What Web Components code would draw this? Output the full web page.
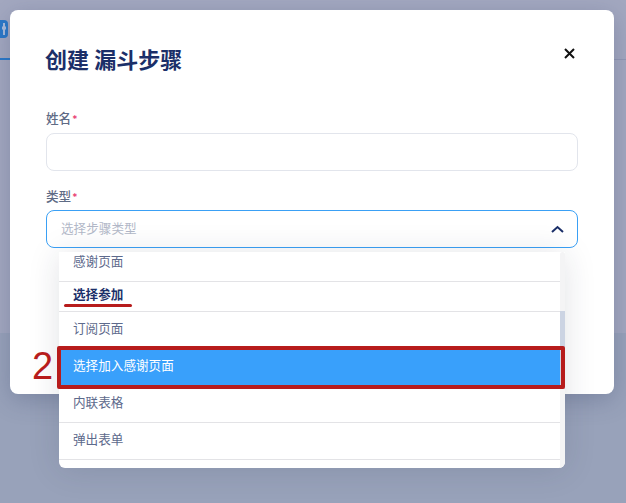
<!DOCTYPE html>
<html lang="zh">
<head>
<meta charset="utf-8">
<title>创建 漏斗步骤</title>
<style>
  html, body { margin: 0; height: 100%; overflow: hidden; }
  body { font-family: "Inter", "Noto Sans CJK SC", sans-serif; }
</style>
</head>
<body>
<funnel-backdrop>
  <funnel-modal heading="创建 漏斗步骤">
    <funnel-field label="姓名">
      <funnel-input></funnel-input>
    </funnel-field>
    <funnel-field label="类型">
      <funnel-select placeholder="选择步骤类型">
        <funnel-option clipped>感谢页面</funnel-option>
        <funnel-option group>选择参加</funnel-option>
        <funnel-option>订阅页面</funnel-option>
        <funnel-option selected>选择加入感谢页面</funnel-option>
        <funnel-option>内联表格</funnel-option>
        <funnel-option>弹出表单</funnel-option>
      </funnel-select>
    </funnel-field>
  </funnel-modal>
  <funnel-mark></funnel-mark>
</funnel-backdrop>

<script>
class FunnelBackdrop extends HTMLElement {
  constructor() {
    super();
    this.attachShadow({mode: "open"});
    this.shadowRoot.innerHTML = `
      <style>
        :host { display: block; position: relative; width: 626px; height: 503px; overflow: hidden; background: #a3a8c0; }
        #page { display: flex; flex-direction: column; height: 100%; }
        #nav { display: flex; height: 60px; flex: none; }
        #tab { width: 10px; box-sizing: border-box; border-bottom: 2px solid #2a78c8; padding-top: 20px; }
        #badge { display: block; width: 8px; height: 18px; background: #2a78c8; border-radius: 0 4px 4px 0; }
        #rest { flex: 1; border-bottom: 1px solid #9298b4; }
        #lower { margin-top: 273px; flex: 1; background: #98a2ba; }
      </style>
      <div id="page">
        <div id="nav">
          <div id="tab">
            <svg id="badge" viewBox="0 0 8 18">
              <path d="M4 3v12" stroke="#a9bcdc" stroke-width="2" fill="none"/>
              <path d="M2 8h4" stroke="#a9bcdc" stroke-width="3" fill="none"/>
            </svg>
          </div>
          <div id="rest"></div>
        </div>
        <div id="lower"></div>
      </div>
      <slot></slot>`;
  }
}

class FunnelModal extends HTMLElement {
  constructor() {
    super();
    this.attachShadow({mode: "open"});
    this.shadowRoot.innerHTML = `
      <style>
        :host {
          display: block; position: absolute; left: 10px; top: 10px;
          width: 604px; height: 384px; box-sizing: border-box;
          padding: 34px 36px 0 36px;
          background: #fff; border-radius: 8px;
          box-shadow: 0 6px 24px rgba(50, 60, 100, .28);
        }
        header { display: flex; justify-content: space-between; align-items: flex-start; margin-bottom: 33px; }
        h2 { margin: 0 0 0 -1px; font-size: 22px; line-height: 32px; font-weight: 700; color: #1b2f69; }
        svg { display: block; width: 11px; height: 11px; margin: 4px 3px 0 0; }
        #fields { display: flex; flex-direction: column; gap: 16px; }
      </style>
      <header>
        <h2></h2>
        <svg viewBox="0 0 11 11"><path d="M1 1l9 9M10 1l-9 9" stroke="#111" stroke-width="2" fill="none"/></svg>
      </header>
      <div id="fields"><slot></slot></div>`;
  }
  connectedCallback() {
    this.shadowRoot.querySelector("h2").textContent = this.getAttribute("heading");
  }
}

class FunnelField extends HTMLElement {
  constructor() {
    super();
    this.attachShadow({mode: "open"});
    this.shadowRoot.innerHTML = `
      <style>
        :host { display: block; }
        label { display: flex; height: 18px; box-sizing: border-box; padding-top: 2px; align-items: center; font-size: 12.6px; line-height: 16px; font-weight: 500; color: #5f6b85; margin-bottom: 5px; }
        :host(:first-child) label { margin-bottom: 6px; }
        span { color: #e8356d; font-size: 10px; line-height: 10px; margin-left: 1px; }
      </style>
      <label><b style="font-weight:inherit"></b><span>*</span></label>
      <slot></slot>`;
  }
  connectedCallback() {
    this.shadowRoot.querySelector("b").textContent = this.getAttribute("label");
  }
}

class FunnelInput extends HTMLElement {
  constructor() {
    super();
    this.attachShadow({mode: "open"});
    this.shadowRoot.innerHTML = `
      <style>
        :host { display: block; }
        input {
          display: block; width: 100%; height: 38px; box-sizing: border-box;
          border: 1px solid #e2e5ec; border-radius: 8px; background: #fff;
          outline: none; padding: 0 15px; font: inherit;
        }
      </style>
      <input type="text">`;
  }
}

class FunnelSelect extends HTMLElement {
  constructor() {
    super();
    this.attachShadow({mode: "open"});
    this.shadowRoot.innerHTML = `
      <style>
        :host { display: block; position: relative; }
        #control {
          display: flex; align-items: center; justify-content: space-between;
          height: 38px; box-sizing: border-box; padding: 0 13px 0 14px;
          border: 1px solid #3aa0f5; border-radius: 8px; background: #fff;
          font-size: 12.6px; color: #b2b8c8;
        }
        #placeholder { margin-bottom: 4px; }
        svg { display: block; width: 13px; height: 8px; }
        #menu {
          position: absolute; left: 13px; top: 42px; width: 506px; height: 216px;
          display: flex; background: #fff; border-radius: 0 0 6px 6px;
          box-shadow: 0 2px 32px rgba(30, 35, 60, .13);
          overflow: hidden;
        }
        #list { flex: 1; min-width: 0; display: flex; flex-direction: column; }
        #track { width: 5px; flex: none; background: #f4f4f5; border-radius: 3px 3px 0 0; }
        #thumb { width: 5px; height: 78px; margin-top: 59px; background: #ccd4e3; }
      </style>
      <div id="control">
        <span id="placeholder"></span>
        <svg viewBox="0 0 13 8"><path d="M1 7l5.5-5L12 7" stroke="#1b2f69" stroke-width="2" fill="none"/></svg>
      </div>
      <div id="menu">
        <div id="list"><slot></slot></div>
        <div id="track"><div id="thumb"></div></div>
      </div>`;
  }
  connectedCallback() {
    this.shadowRoot.querySelector("#placeholder").textContent = this.getAttribute("placeholder");
  }
}

class FunnelOption extends HTMLElement {
  constructor() {
    super();
    this.attachShadow({mode: "open"});
    this.shadowRoot.innerHTML = `
      <style>
        :host {
          display: flex; align-items: center; height: 37px; box-sizing: border-box;
          padding: 0 14px 6px; border-bottom: 1px solid #e3e3e6;
          font-size: 12.6px; color: #5d6a8c;
        }
        :host([clipped]) { height: 30px; padding-bottom: 12px; }
        :host([group]) { height: 30px; padding-bottom: 6px; font-weight: 700; color: #1b2f69; }
        :host([selected]) { background: #39a0fb; color: #fff; border-bottom-color: #fff; }
      </style>
      <slot></slot>`;
  }
}

// Red review marks drawn on top of the screenshot
class FunnelMark extends HTMLElement {
  constructor() {
    super();
    this.attachShadow({mode: "open"});
    this.shadowRoot.innerHTML = `
      <style>
        :host { display: block; }
        #line { position: absolute; left: 64px; top: 304px; width: 68px; height: 3px; background: #b71c1c; border-radius: 2px; }
        #box { position: absolute; left: 57px; top: 346px; width: 508px; height: 43px; box-sizing: border-box; border: 4px solid #b71c1c; border-radius: 2px; }
        #num { position: absolute; left: 32px; top: 344px; font: 38px/44px "Liberation Sans", sans-serif; color: #b71c1c; }
      </style>
      <div id="line"></div>
      <div id="box"></div>
      <div id="num">2</div>`;
  }
}

customElements.define("funnel-backdrop", FunnelBackdrop);
customElements.define("funnel-modal", FunnelModal);
customElements.define("funnel-field", FunnelField);
customElements.define("funnel-input", FunnelInput);
customElements.define("funnel-select", FunnelSelect);
customElements.define("funnel-option", FunnelOption);
customElements.define("funnel-mark", FunnelMark);
</script>
</body>
</html>
